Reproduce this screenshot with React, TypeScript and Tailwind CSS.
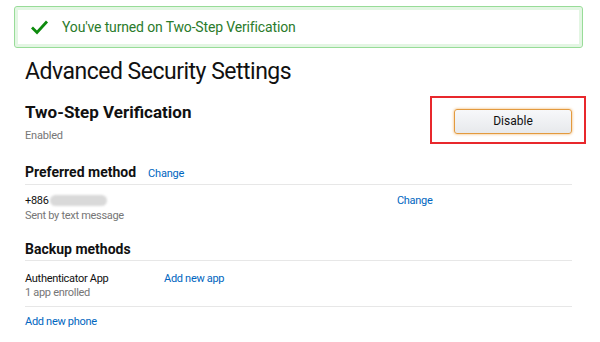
export default function App() {
  return (
    <div className="w-[600px] h-[342px] bg-white overflow-hidden text-[#111] font-['Roboto',sans-serif]">
      <div className="pt-[6px] pl-[14px]">
        <div className="w-[569px] h-[42px] rounded-[3px] border border-[#98dc98] shadow-[inset_0_0_0_3px_#e3f6e3] flex items-center pl-[15px] gap-[13px]">
          <svg width="19" height="16" viewBox="0 0 19 16">
            <path d="M2 8.5 L7 13.5 L17 2.5" fill="none" stroke="#0d8a0d" strokeWidth="2.8" />
          </svg>
          <span className="text-[14px] tracking-[-0.15px] text-[#2b7b2b]">You've turned on Two-Step Verification</span>
        </div>
      </div>

      <div className="pl-[25px] w-[572px]">
        <h1 className="mt-[8px] text-[23px] leading-[32px] tracking-[-0.5px]">Advanced Security Settings</h1>

        <div className="flex justify-between items-start">
          <div className="mt-[13px]">
            <h2 className="text-[17px] leading-[22px] font-bold">Two-Step Verification</h2>
            <div className="text-[11px] leading-[16px] mt-[5px] tracking-[-0.2px] text-[#767676]">Enabled</div>
          </div>
          <div className="mt-[8px] -mr-[14px] w-[156px] h-[48px] border-2 border-[#e8282c] pl-[22px] pt-[10px]">
            <button className="w-[118px] h-[25px] rounded-[3px] border border-[#e39a3e] shadow-[0_0_3px_#f0b060] bg-gradient-to-b from-[#f7f8fa] to-[#e7e9ec] text-[12px] text-[#111]">
              Disable
            </button>
          </div>
        </div>

        <div className="mt-[19px] flex items-baseline gap-[12px]">
          <h3 className="text-[14px] leading-[18px] font-bold">Preferred method</h3>
          <a className="text-[11px] tracking-[-0.2px] text-[#0066c0]">Change</a>
        </div>
        <div className="mt-[1px] border-t border-[#e7e7e7]" />
        <div className="flex pt-[8px] text-[11px] leading-[15px] tracking-[-0.3px]">
          <div className="w-[372px]">
            <div className="flex items-center">
              <span>+886</span>
              <span className="ml-[1px] w-[57px] h-[11px] rounded-[6px] bg-[#d9d9d9] blur-[1px]" />
            </div>
            <div className="text-[#767676]">Sent by text message</div>
          </div>
          <a className="text-[#0066c0]">Change</a>
        </div>

        <h3 className="mt-[17px] text-[14px] leading-[18px] font-bold">Backup methods</h3>
        <div className="mt-[2px] border-t border-[#e7e7e7]" />
        <div className="flex pt-[11px] pb-[6px] text-[11px] leading-[14px] tracking-[-0.3px]">
          <div className="w-[139px]">
            <div>Authenticator App</div>
            <div className="text-[#767676]">1 app enrolled</div>
          </div>
          <a className="text-[#0066c0]">Add new app</a>
        </div>
        <div className="border-t border-[#e7e7e7]" />
        <a className="block mt-[8px] text-[11px] leading-[14px] tracking-[-0.3px] text-[#0066c0]">Add new phone</a>
      </div>
    </div>
  );
}
